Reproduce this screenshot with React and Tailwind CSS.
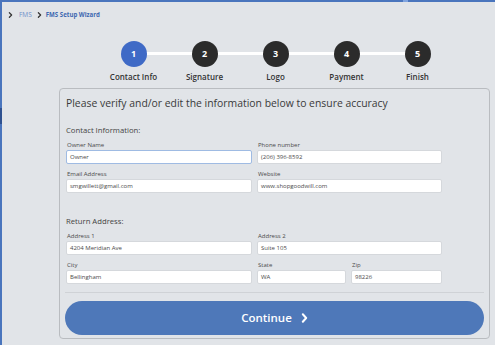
import React from "react";

const font = { fontFamily: '"Open Sans", "Liberation Sans", sans-serif' };

function Chevron({ className }) {
  return (
    <svg viewBox="0 0 6 8" className={className} fill="none">
      <polyline points="1.5,1 4.5,4 1.5,7" stroke="currentColor" strokeWidth="1.6" strokeLinecap="round" strokeLinejoin="round" />
    </svg>
  );
}

const steps = ["Contact Info", "Signature", "Logo", "Payment", "Finish"];

function Field({ label, value, focused }) {
  return (
    <div className="flex flex-col">
      <div className="h-[9px] leading-[9px] text-[6px] text-[#4a4a4a] pl-[1px]">{label}</div>
      <div
        className={`h-[14px] bg-white rounded-[2px] border flex items-center px-[3px] text-[6px] text-[#4a4a4a] ${
          focused ? "border-[#9fbbe3]" : "border-[#d5d8dc]"
        }`}
      >
        {value}
      </div>
    </div>
  );
}

export default function App() {
  return (
    <div className="w-[495px] h-[345px] bg-[#e1e4e8] overflow-hidden flex flex-col" style={font}>
      <div className="h-[2px] bg-[#4a75bd] flex shrink-0">
        <div className="ml-[403px] w-[5px] bg-[#7fa4e0]" />
      </div>
      <div className="flex flex-1">
        <div className="w-[2px] bg-[#4a75bd] flex flex-col shrink-0">
          <div className="mt-[106px] h-[16px] bg-[#2f5190]" />
        </div>
        <div className="flex-1 flex flex-col">
          {/* breadcrumb */}
          <div className="h-[26px] flex items-center pl-[6px]">
            <Chevron className="w-[5px] h-[6px] text-[#333]" />
            <span className="ml-[6px] text-[6.5px] text-[#6f8fc8]">FMS</span>
            <Chevron className="ml-[5px] w-[5px] h-[6px] text-[#333]" />
            <span className="ml-[4px] text-[6.1px] font-bold text-[#3d67b0]">FMS Setup Wizard</span>
          </div>
          {/* stepper */}
          <div className="relative mt-[13px] ml-[96px] w-[355px] flex">
            <div className="absolute left-[35px] right-[35px] top-[11px] h-[3px] bg-white" />
            {steps.map((s, i) => (
              <div key={s} className="relative w-[71px] flex flex-col items-center">
                <div
                  className={`w-[26px] h-[26px] rounded-full flex items-center justify-center text-white text-[9px] font-bold ${
                    i === 0 ? "bg-[#3f6ac6]" : "bg-[#2b2b2b]"
                  }`}
                >
                  {i + 1}
                </div>
                <div className="mt-[4px] h-[12px] leading-[12px] text-[8px] font-semibold text-[#333] whitespace-nowrap">{s}</div>
              </div>
            ))}
          </div>
          {/* panel */}
          <div className="mt-[5px] ml-[57px] w-[431px] h-[251px] border border-[#b9bcc0] rounded-[4px] bg-[#e1e4e8] px-[5px] pt-[6px] flex flex-col">
            <div className="h-[16px] leading-[16px] text-[10.4px] text-[#3a3a3a] pl-[1px] whitespace-nowrap">
              Please verify and/or edit the information below to ensure accuracy
            </div>
            <div className="mt-[13px] h-[12px] leading-[12px] text-[7.7px] text-[#444] pl-[1px]">Contact Information:</div>
            <div className="mt-[5px] ml-[1px] grid grid-cols-[186px_185px] gap-x-[5px] gap-y-[6px]">
              <Field label="Owner Name" value="Owner" focused />
              <Field label="Phone number" value="(206) 396-8592" />
              <Field label="Email Address" value="smgwillett@gmail.com" />
              <Field label="Website" value="www.shopgoodwill.com" />
            </div>
            <div className="mt-[22px] h-[12px] leading-[12px] text-[7.7px] text-[#444] pl-[1px]">Return Address:</div>
            <div className="mt-[5px] ml-[1px] grid grid-cols-[186px_185px] gap-x-[5px]">
              <Field label="Address 1" value="4204 Meridian Ave" />
              <Field label="Address 2" value="Suite 105" />
            </div>
            <div className="mt-[6px] ml-[1px] grid grid-cols-[186px_89px_91px] gap-x-[5px]">
              <Field label="City" value="Bellingham" />
              <Field label="State" value="WA" />
              <Field label="Zip" value="98226" />
            </div>
            <div className="mt-[8px] h-[1px] bg-[#cfd2d6]" />
            <button className="mt-[8px] h-[34px] rounded-full bg-[#4e78b9] flex items-center justify-center text-white text-[11.5px] font-semibold">
              <span>Continue</span>
              <svg viewBox="0 0 8 12" className="ml-[9px] w-[7px] h-[10px]" fill="none">
                <polyline points="2,1.5 6,6 2,10.5" stroke="white" strokeWidth="2.4" strokeLinecap="round" strokeLinejoin="round" />
              </svg>
            </button>
          </div>
        </div>
      </div>
    </div>
  );
}
